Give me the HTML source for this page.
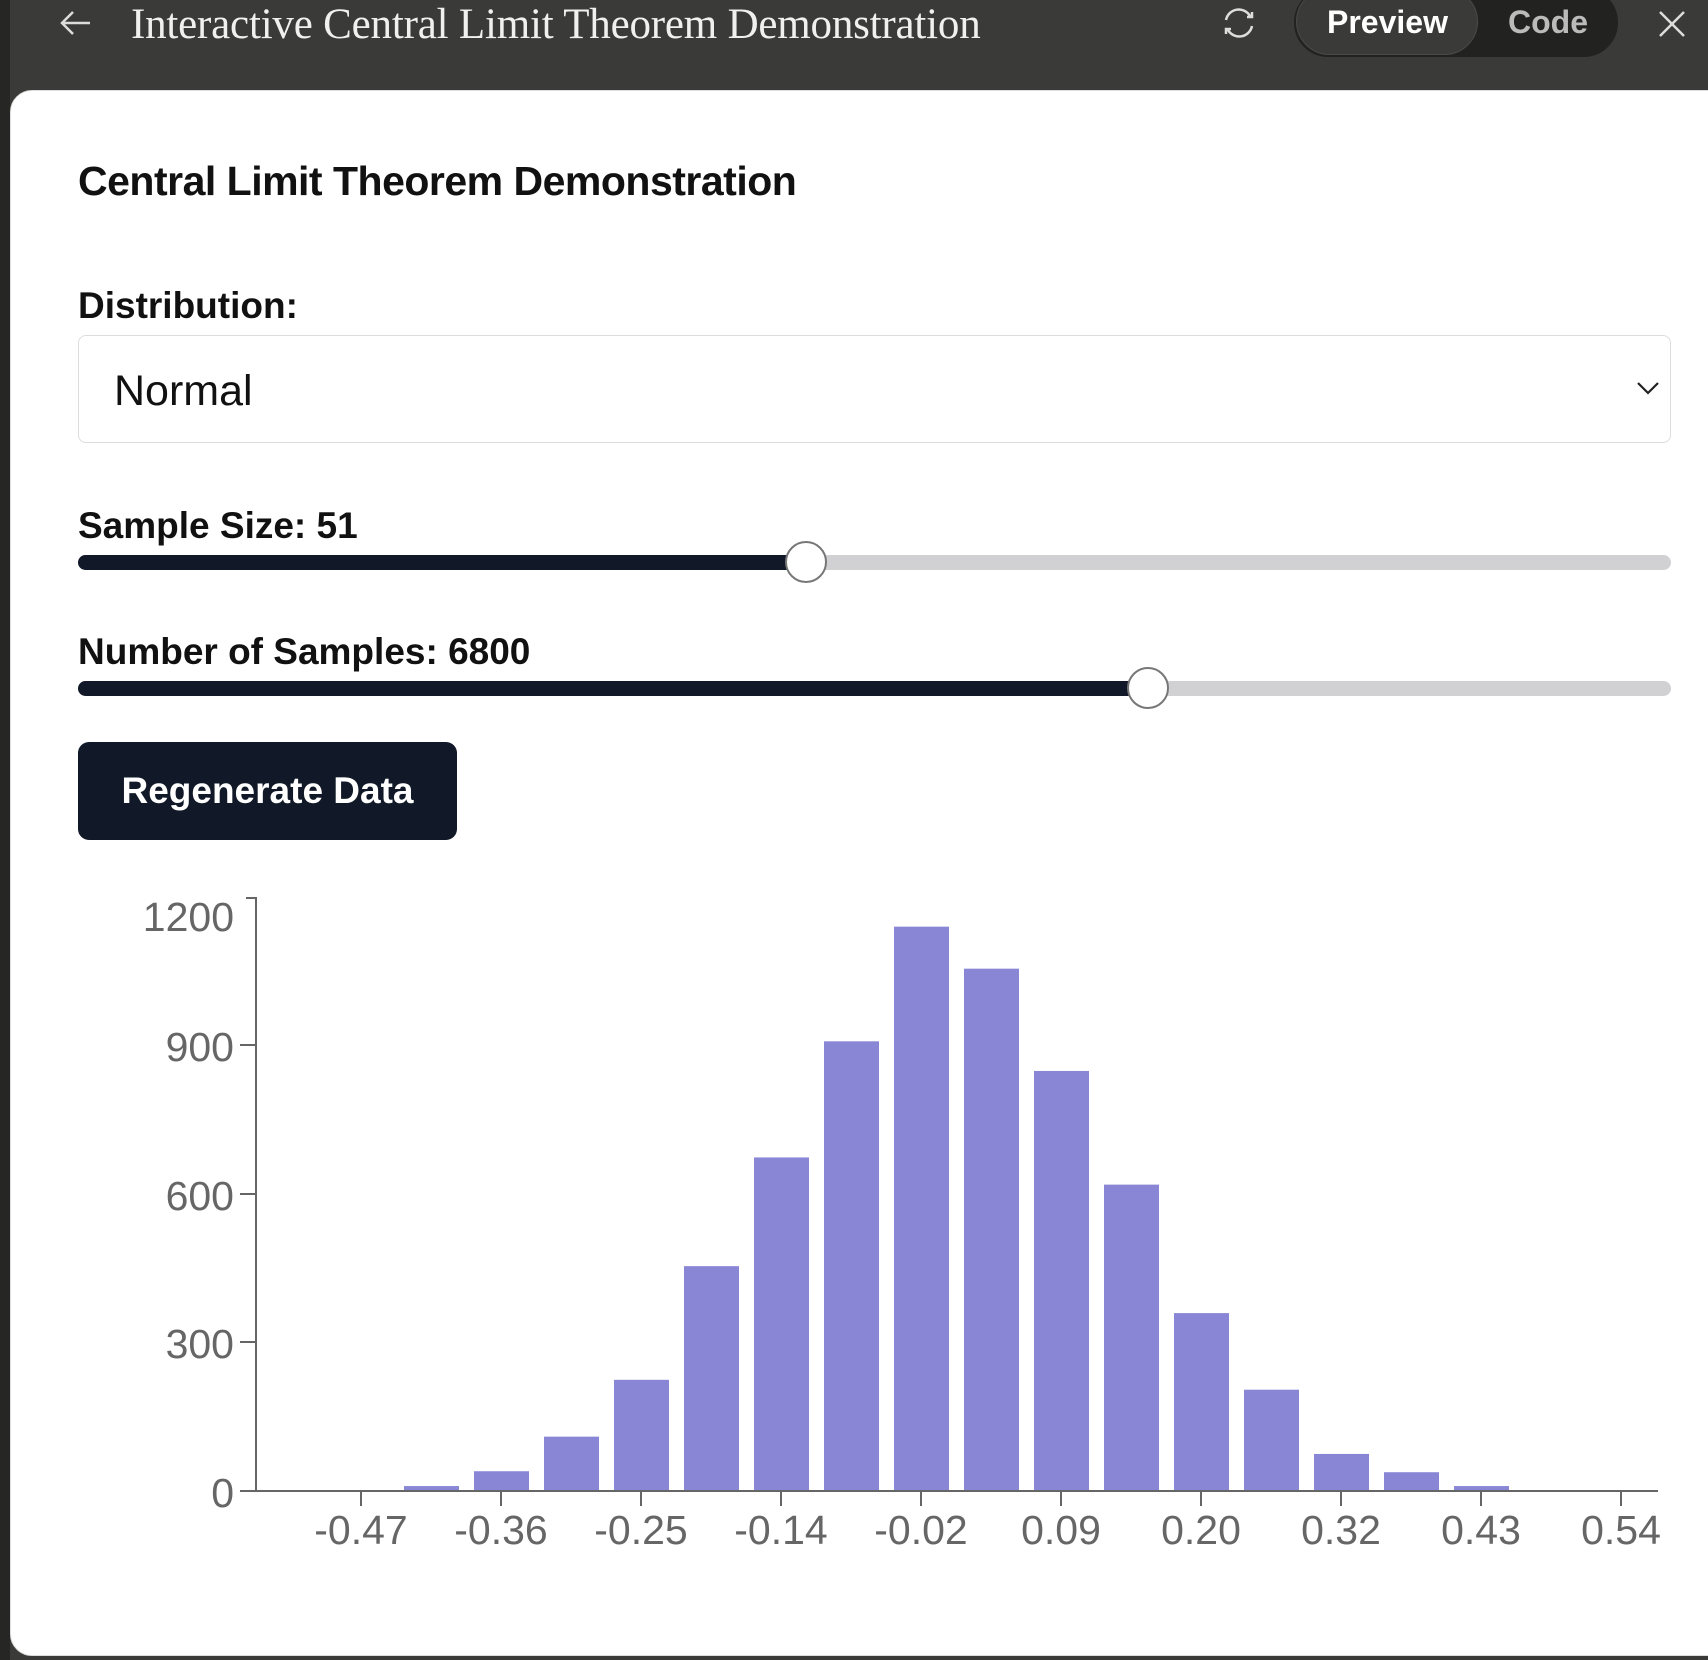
<!DOCTYPE html>
<html><head><meta charset="utf-8"><style>
*{margin:0;padding:0;box-sizing:border-box}
body{width:1708px;height:1660px;background:#3a3a38;position:relative;overflow:hidden;font-family:"Liberation Sans",sans-serif}
.strip{position:absolute;left:0;top:0;width:10px;height:1660px;background:#262624}
.card{position:absolute;left:10px;top:90px;width:1720px;height:1566px;background:#fff;border-radius:22px 0 0 22px;border:1px solid #ddd}
.t{position:absolute;white-space:nowrap}
.track{position:absolute;left:78px;width:1593px;height:15px;border-radius:8px;background:#d1d1d4}
.fill{position:absolute;left:0;top:0;height:15px;border-radius:8px;background:#111827}
.thumb{position:absolute;width:42px;height:42px;border-radius:50%;background:#fff;border:2px solid #777;top:-14px}
</style></head><body>
<div class="strip"></div>
<svg class="t" style="left:58px;top:8px" width="36" height="30" viewBox="0 0 36 30"><path d="M32 15H4M15 4L4 15l11 11" stroke="#ddd" stroke-width="2.5" fill="none"/></svg>
<div class="t" style="left:131px;top:0px;font-family:'Liberation Serif',serif;font-size:43px;color:#f0f0ee;letter-spacing:-0.2px">Interactive Central Limit Theorem Demonstration</div>
<svg class="t" style="left:1220px;top:4px" width="38" height="38" viewBox="0 0 38 38"><path d="M6 16a13 13 0 0 1 24-4M32 8v5h-5M32 22a13 13 0 0 1-24 4M6 30v-5h5" stroke="#ddd" stroke-width="2.5" fill="none"/></svg>
<div class="t" style="left:1294px;top:-12px;width:324px;height:69px;border-radius:34px;background:#222220"></div>
<div class="t" style="left:1296px;top:-12px;width:182px;height:67px;border-radius:34px;background:#3a3a38;border:1px solid #4a4a48"></div>
<div class="t" style="left:1327px;top:4px;font-size:32px;font-weight:bold;color:#fff">Preview</div>
<div class="t" style="left:1508px;top:4px;font-size:32px;font-weight:bold;color:#bbb">Code</div>
<svg class="t" style="left:1656px;top:8px" width="32" height="32" viewBox="0 0 32 32"><path d="M4 4l24 24M28 4L4 28" stroke="#ddd" stroke-width="2.5"/></svg>
<div class="card"></div>
<div class="t" style="left:78px;top:158px;font-size:41px;font-weight:bold;color:#111;letter-spacing:-0.5px">Central Limit Theorem Demonstration</div>
<div class="t" style="left:78px;top:285px;font-size:37px;font-weight:bold;color:#111">Distribution:</div>
<div class="t" style="left:78px;top:335px;width:1593px;height:108px;border:1px solid #ddd;border-radius:8px"></div>
<div class="t" style="left:114px;top:367px;font-size:43px;color:#111">Normal</div>
<svg class="t" style="left:1636px;top:380px" width="24" height="16" viewBox="0 0 24 16"><path d="M2 3l10 10 10-10" stroke="#222" stroke-width="2.2" fill="none"/></svg>
<div class="t" style="left:78px;top:505px;font-size:37px;font-weight:bold;color:#111">Sample Size: 51</div>
<div class="track" style="top:555px"><div class="fill" style="width:730px"></div><div class="thumb" style="left:707px"></div></div>
<div class="t" style="left:78px;top:631px;font-size:37px;font-weight:bold;color:#111">Number of Samples: 6800</div>
<div class="track" style="top:681px"><div class="fill" style="width:1072px"></div><div class="thumb" style="left:1049px"></div></div>
<div class="t" style="left:78px;top:742px;width:379px;height:98px;border-radius:11px;background:#111827"></div>
<div class="t" style="left:78px;top:770px;width:379px;text-align:center;font-size:37px;font-weight:bold;color:#fff">Regenerate Data</div>
<svg class="t" style="left:0;top:0" width="1708" height="1660">
<g fill="#8a86d6" id="bars"></g>
<g stroke="#666" stroke-width="2" fill="none">
<path d="M246 898H256V1491M240 1491H1658"/>
<path d="M240 1045h16M240 1194h16M240 1342h16"/>
</g>
<g font-family="'Liberation Sans',sans-serif" font-size="41" fill="#666" text-anchor="end">
<text x="234" y="931">1200</text><text x="234" y="1061">900</text><text x="234" y="1210">600</text><text x="234" y="1358">300</text><text x="234" y="1507">0</text>
</g>
<g id="x" font-family="'Liberation Sans',sans-serif" font-size="41" fill="#666" text-anchor="middle" stroke="#666" stroke-width="2"></g>
</svg>
<script>
var v=[2,2,10,40,110,225,455,675,910,1142,1057,850,620,360,205,75,38,10,2,2];
var s='';v.forEach(function(c,i){var h=c*593/1200;s+='<rect x="'+(256+i*70+8)+'" y="'+(1491-h)+'" width="55" height="'+h+'"/>';});
document.getElementById('bars').innerHTML=s;
var L=['-0.47','-0.36','-0.25','-0.14','-0.02','0.09','0.20','0.32','0.43','0.54'],x='';
L.forEach(function(l,j){var p=256+105+140*j;x+='<line x1="'+p+'" y1="1491" x2="'+p+'" y2="1506"/><text x="'+p+'" y="1544" stroke="none">'+l+'</text>';});
document.getElementById('x').innerHTML=x;
</script>
</body></html>
